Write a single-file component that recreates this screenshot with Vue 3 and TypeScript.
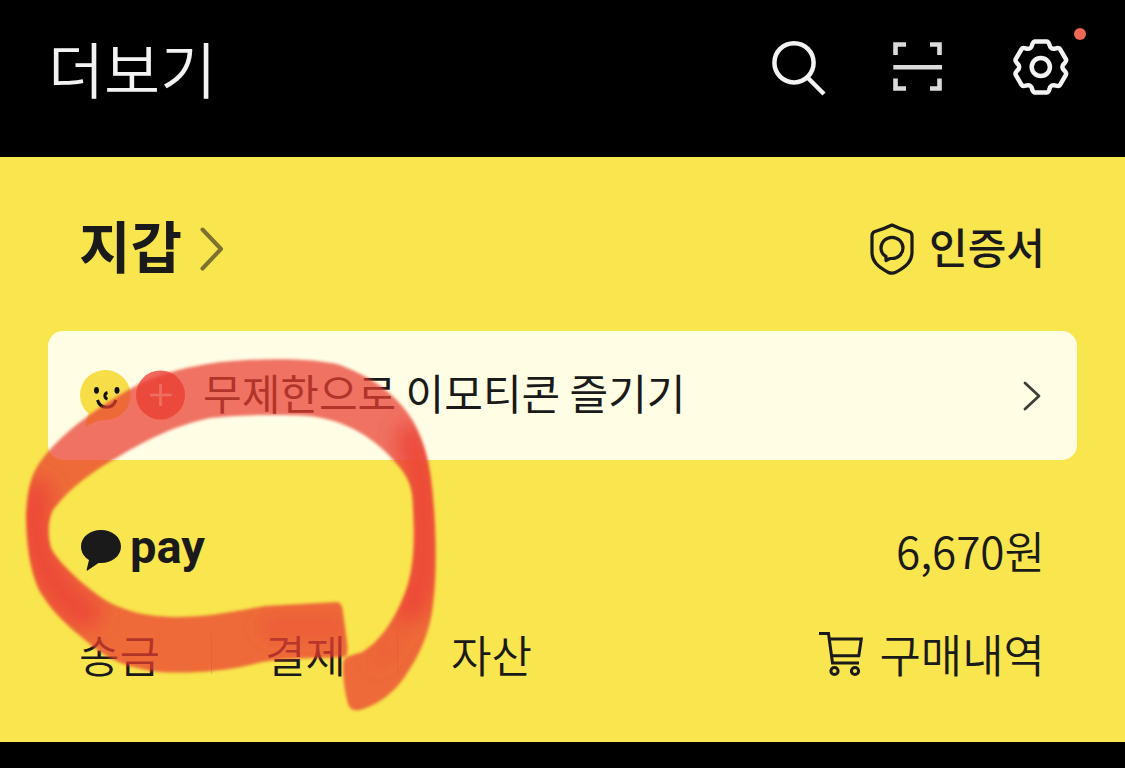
<script setup lang="ts">
interface Point {
  x: number
  y: number
}

const services: string[] = ['송금', '결제', '자산']

function rotate(p: Point, degrees: number): string {
  const a = (degrees * Math.PI) / 180
  const x = p.x * Math.cos(a) - p.y * Math.sin(a)
  const y = p.x * Math.sin(a) + p.y * Math.cos(a)
  return `${x.toFixed(2)} ${y.toFixed(2)}`
}

function gearOutline(): string {
  let d = ''
  for (let k = 0; k < 6; k++) {
    const t = k * 60
    d += `${k === 0 ? 'M' : 'L'}${rotate({ x: -5.8, y: -25.6 }, t)}`
    d += `L${rotate({ x: 5.8, y: -25.6 }, t)}`
    d += `Q${rotate({ x: 7.6, y: -25.6 }, t)} ${rotate({ x: 8.6, y: -22.4 }, t)}`
    d += `Q${rotate({ x: 0, y: -19.4 }, t + 30)} ${rotate({ x: -8.6, y: -22.4 }, t + 60)}`
    d += `Q${rotate({ x: -7.6, y: -25.6 }, t + 60)} ${rotate({ x: -5.8, y: -25.6 }, t + 60)}`
  }
  return d + 'Z'
}

const gear = gearOutline()

const marker =
  'M337 602 L265 606 C235 611 215 616 180 617 C145 617 125 611 105 600 C80 583 60 563 52 550 ' +
  'C47 538 48 520 53 510 C70 487 95 470 118 457 C145 441 170 427 210 418 C240 414 290 415 310 416 ' +
  'C345 420 375 438 395 462 C410 478 413 490 413 510 C415 545 413 570 406 590 C396 618 380 642 362 652 ' +
  'C352 656 343 655 343 665 C343 680 345 692 348 704 C351 711 356 712 366 708 C380 703 394 692 404 678 ' +
  'C420 655 430 632 433 605 C437 575 436 535 434 508 C431 465 426 445 413 421 C401 401 380 380 340 365 ' +
  'C315 358 260 358 220 362 C180 368 155 375 130 389 C100 406 65 430 43 458 C30 474 27 492 26 515 ' +
  'C26 545 31 578 42 595 C53 613 70 628 85 640 C105 658 125 668 160 672 C190 674 225 671 250 665 ' +
  'C275 658 300 659 344 657 Q349 656 347 642 L343 612 Q342 602 337 602 Z'
</script>

<template>
  <div class="screen">
    <header class="top">
      <h1>더보기</h1>
      <div class="actions">
        <button type="button" aria-label="검색">
          <svg viewBox="0 0 58 58" fill="none" stroke="#f3f3f3" stroke-width="4.5">
            <circle cx="22" cy="24.8" r="19.6" />
            <path d="M35.5 39.5 L52 56" />
          </svg>
        </button>
        <button type="button" aria-label="스캔">
          <svg viewBox="0 0 58 58" fill="none" stroke="#dadada" stroke-width="4.6">
            <path d="M3.5 17V6.5H14 M38 6.5H47.5V17 M3.5 40.5V50.5H14 M38 50.5H47.5V40.5 M1.3 29.3H50" />
          </svg>
        </button>
        <button type="button" class="settings" aria-label="설정">
          <svg viewBox="0 0 58 58" fill="none" stroke="#f3f3f3" stroke-width="4.5">
            <g transform="translate(28.8 29)">
              <path :d="gear" stroke-linejoin="round" />
              <circle r="9.1" />
            </g>
          </svg>
          <span class="dot"></span>
        </button>
      </div>
    </header>

    <main class="wallet">
      <div class="row heading">
        <a href="#" class="title">
          <h2>지갑</h2>
          <svg class="chevron" viewBox="0 0 24 44" fill="none" stroke="#7c712d" stroke-width="4" stroke-linecap="round" stroke-linejoin="round">
            <path d="M2.5 2.5 L21 22 L2.5 41.5" />
          </svg>
        </a>
        <a href="#" class="cert">
          <svg class="shield" viewBox="0 0 44 52" fill="none" stroke="#1a1a1a" stroke-width="3.2" stroke-linejoin="round">
            <path d="M22 2 C24 3 34 7 39 8.5 Q42 9.4 42 13 V29 C42 38 37 43.5 26 49.2 Q22 51.2 18 49.2 C7 43.5 2 38 2 29 V13 Q2 9.4 5 8.5 C10 7 20 3 22 2 Z" />
            <path d="M16 37.5 V33.5 C12.5 31.5 11 28.5 11 25 C11 19 16 14.3 22 14.3 C28 14.3 33 19 33 25 C33 31 28 35.5 22 35.5 H20 Z" />
          </svg>
          <span class="text">인증서</span>
        </a>
      </div>

      <a href="#" class="banner">
        <svg class="emoji" viewBox="0 0 106 60">
          <path d="M27 0 A25.5 25 0 1 1 23 50 C16 51 9 54 6 57 C5 53 7 47 9 44 A25.5 25 0 0 1 27 0 Z" fill="#f7de49" />
          <ellipse cx="16.5" cy="20.3" rx="2.5" ry="3.4" fill="#111" />
          <ellipse cx="37" cy="20.3" rx="2.5" ry="3.4" fill="#111" />
          <path d="M27.5 22.5 C24 23.5 24 28 27.5 29" fill="none" stroke="#111" stroke-width="3" />
          <path d="M17.5 30 C20 39.5 33 39.5 36 30" fill="none" stroke="#111" stroke-width="3" />
          <circle cx="80.5" cy="25" r="24.5" fill="#f2685c" />
          <path d="M70 25 H91.5 M80.5 14 V36" stroke="#fff3ef" stroke-width="2.6" />
        </svg>
        <span class="banner-text text">무제한으로 이모티콘 즐기기</span>
        <svg class="arrow" viewBox="0 0 18 30" fill="none" stroke="#3f3f39" stroke-width="2.8" stroke-linecap="round" stroke-linejoin="round">
          <path d="M2 2 L16 15 L2 28" />
        </svg>
      </a>

      <div class="row pay-row">
        <a href="#" class="pay">
          <svg class="bubble" viewBox="0 0 42 42">
            <path d="M21 1 C32 1 41 8 41 17.5 C41 27 32 34 21 34 H18.5 L7.5 41.5 Q6.5 42 6.7 40.5 L9 31 C4 28 1 23 1 17.5 C1 8 10 1 21 1 Z" fill="#1a1a1a" />
          </svg>
          <strong class="text">pay</strong>
        </a>
        <span class="balance">6,670원</span>
      </div>

      <div class="row links">
        <nav>
          <a v-for="name in services" :key="name" href="#">{{ name }}</a>
        </nav>
        <a href="#" class="orders">
          <svg class="cart" viewBox="0 0 44 46" fill="none" stroke="#1a1a1a" stroke-width="3">
            <path d="M0 2.5 H9.5 L13.5 32 H40 M10.5 8 H42.3 L39.8 24.7 H12.5" />
            <circle cx="15.5" cy="40" r="3.6" />
            <circle cx="36" cy="40" r="3.6" />
          </svg>
          <span>구매내역</span>
        </a>
      </div>
    </main>

    <svg class="marker" viewBox="0 0 460 730" aria-hidden="true">
      <defs>
        <filter id="edge" x="-5%" y="-5%" width="110%" height="110%">
          <feGaussianBlur stdDeviation="1.6" />
        </filter>
        <filter id="dense" filterUnits="userSpaceOnUse" x="0" y="330" width="460" height="400">
          <feGaussianBlur stdDeviation="10" />
        </filter>
        <mask id="stroke-area" maskUnits="userSpaceOnUse" x="0" y="330" width="460" height="400">
          <path :d="marker" fill="#fff" filter="url(#edge)" />
        </mask>
      </defs>
      <g mask="url(#stroke-area)">
        <rect x="0" y="330" width="460" height="400" fill="#e93e32" fill-opacity="0.73" />
        <g fill="none" stroke="#ec4639" stroke-linecap="round" filter="url(#dense)">
          <path d="M36 495 C31 520 34 555 56 585 Q70 605 85 612" stroke-width="34" stroke-opacity="0.9" />
          <path d="M412 440 C425 470 424 520 424 560 Q422 585 410 605" stroke-width="34" stroke-opacity="0.9" />
          <path d="M410 605 Q395 640 378 660" stroke-width="20" stroke-opacity="0.3" />
          <path d="M270 627 H338" stroke-width="24" stroke-opacity="0.4" />
        </g>
      </g>
    </svg>
  </div>
</template>

<style>
body {
  margin: 0;
  background: #000;
}
</style>

<style scoped>
.screen {
  position: relative;
  min-height: 100vh;
  background: #000;
  color: #1a1a1a;
  font-family: "Noto Sans CJK KR", sans-serif;
}
a {
  color: inherit;
  text-decoration: none;
}
h1,
h2 {
  margin: 0;
}
svg {
  display: block;
  flex: none;
}
.text {
  padding-bottom: 7px;
}
.top {
  display: flex;
  align-items: flex-start;
  justify-content: space-between;
  height: 119px;
  padding: 38px 55px 0 48px;
}
h1 {
  color: #f3f3f3;
  font-size: 61px;
  font-weight: 350;
  line-height: 60px;
}
.actions {
  display: flex;
  gap: 62px;
}
button {
  width: 58px;
  height: 58px;
  padding: 0;
  border: 0;
  background: none;
}
.settings {
  position: relative;
}
.dot {
  position: absolute;
  top: -10px;
  right: -16px;
  width: 12px;
  height: 12px;
  border-radius: 50%;
  background: #ee6752;
}
.wallet {
  padding: 0 48px 38px;
  background: #f9e54d;
}
.row {
  display: flex;
  align-items: center;
  justify-content: space-between;
  height: 108px;
  padding: 0 32px 0 31px;
}
.heading {
  height: 164px;
  padding-top: 10px;
}
.title {
  display: flex;
  align-items: center;
  gap: 18px;
}
h2 {
  padding-bottom: 10px;
  font-size: 56px;
  font-weight: 700;
  line-height: 60px;
}
.chevron {
  width: 24px;
  height: 44px;
}
.cert {
  display: flex;
  align-items: center;
  gap: 15px;
  font-size: 42px;
  font-weight: 500;
  line-height: 60px;
}
.shield {
  width: 44px;
  height: 52px;
}
.banner {
  display: flex;
  align-items: center;
  height: 129px;
  padding: 0 36px 0 32px;
  border-radius: 15px;
  background: #fffde4;
}
.emoji {
  width: 106px;
  height: 60px;
  margin-top: 8px;
}
.banner-text {
  flex: 1;
  padding-left: 17px;
  font-size: 42px;
  line-height: 60px;
}
.arrow {
  width: 18px;
  height: 30px;
}
.pay-row {
  margin-top: 36px;
}
.pay {
  display: flex;
  align-items: center;
  gap: 8px;
  padding-left: 1px;
}
.bubble {
  width: 42px;
  height: 42px;
}
strong {
  font-family: Roboto, sans-serif;
  font-size: 47px;
  font-weight: 700;
  line-height: 60px;
}
.balance,
.links {
  font-size: 44px;
  font-weight: 350;
  line-height: 60px;
}
.links {
  height: 100px;
}
nav {
  display: flex;
  align-items: center;
}
nav a + a {
  display: flex;
  align-items: center;
}
nav a + a::before {
  content: "";
  width: 1px;
  height: 40px;
  margin: 0 53px 0 51px;
  background: #d9c646;
}
.orders {
  display: flex;
  align-items: center;
  gap: 16px;
  font-size: 45px;
}
.cart {
  width: 44px;
  height: 46px;
}
.marker {
  position: absolute;
  top: 0;
  left: 0;
  width: 460px;
  height: 730px;
  pointer-events: none;
}
</style>
